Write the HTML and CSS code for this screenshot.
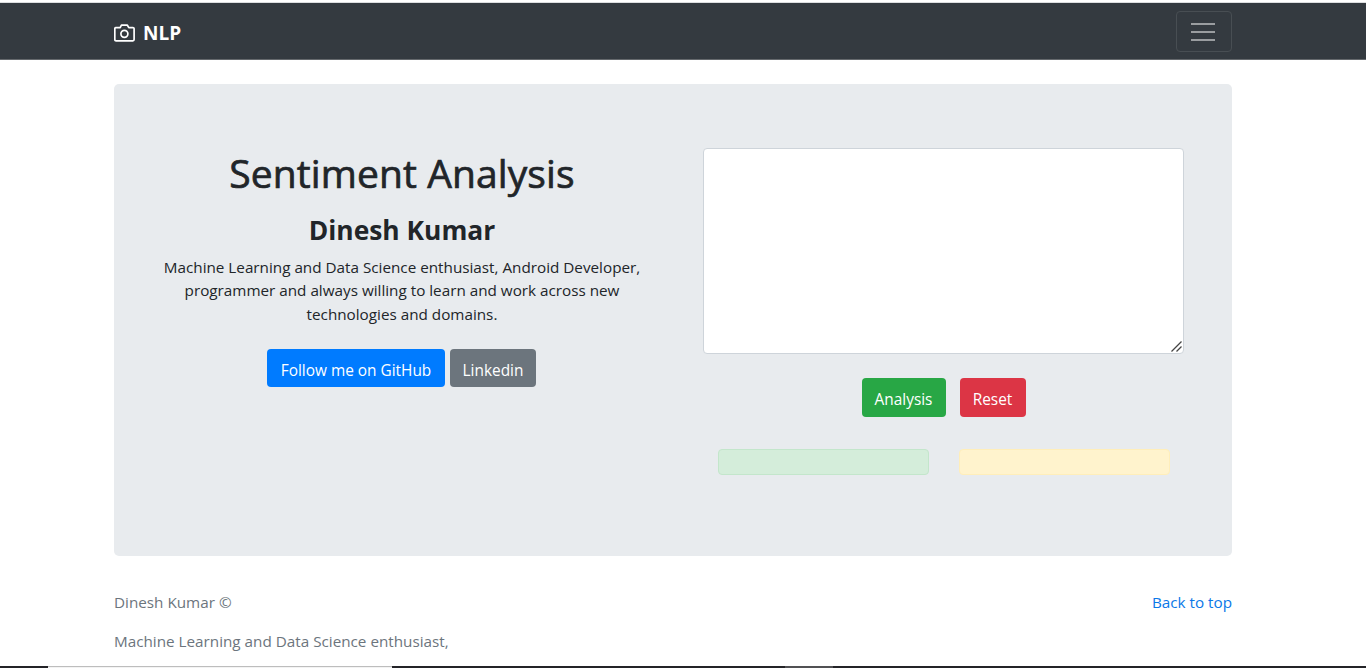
FILE: index.html
```html
<!DOCTYPE html>
<html lang="en">
<head>
<meta charset="utf-8">
<title>NLP</title>
<link rel="stylesheet" href="styles.css">
</head>
<body>
<header class="navbar">
  <div class="container navbar-inner">
    <a class="brand" href="#">
      <svg class="brand-icon" viewBox="0 0 21 18" width="21" height="18" fill="none" stroke="currentColor" stroke-width="1.7" stroke-linejoin="round"><path d="M2 3.6h4.2L7.4 1.2h6L14.8 3.6h4.1a1.2 1.2 0 0 1 1.2 1.2v10.8a1.2 1.2 0 0 1-1.2 1.2H2a1.2 1.2 0 0 1-1.2-1.2V4.8A1.2 1.2 0 0 1 2 3.6z"/><circle cx="10.4" cy="9.8" r="3.5"/></svg>
      <strong class="brand-name">NLP</strong>
    </a>
    <button class="toggler" type="button" aria-label="Toggle navigation">
      <svg width="30" height="30" viewBox="0 0 30 30" stroke="#9a9da0" stroke-width="2"><path d="M3 7h24M3 15h24M3 23h24"/></svg>
    </button>
  </div>
</header>
<main class="container jumbotron">
  <section class="column intro">
    <h1 class="title">Sentiment Analysis</h1>
    <h2 class="author">Dinesh Kumar</h2>
    <p class="bio">Machine Learning and Data Science enthusiast, Android Developer,<br>programmer and always willing to learn and work across new<br>technologies and domains.</p>
    <div class="links">
      <a class="btn btn-primary" href="#">Follow me on GitHub</a>
      <a class="btn btn-secondary" href="#">Linkedin</a>
    </div>
  </section>
  <form class="column analysis">
    <div class="input-wrap">
      <textarea class="input" aria-label="Text"></textarea>
      <svg class="grip" width="12" height="12" viewBox="0 0 12 12" stroke="#444" stroke-width="1.3"><path d="M.5 11.5L10.5 1.5M5.5 11.5L10.5 6.5"/></svg>
    </div>
    <div class="actions">
      <button class="btn btn-success" type="button">Analysis</button>
      <button class="btn btn-danger" type="button">Reset</button>
    </div>
    <div class="results">
      <div class="alert alert-success"></div>
      <div class="alert alert-warning"></div>
    </div>
  </form>
</main>
<footer class="container footer">
  <div class="footer-row">
    <p class="copyright">Dinesh Kumar ©</p>
    <a class="top-link" href="#">Back to top</a>
  </div>
  <p class="tagline">Machine Learning and Data Science enthusiast,</p>
</footer>
<div class="taskbar">
  <div class="taskbar-start"></div>
  <div class="taskbar-search"></div>
  <div class="taskbar-space"></div>
  <div class="taskbar-active"></div>
</div>
</body>
</html>
```
FILE: styles.css
```css
* { box-sizing: border-box; }
body {
  margin: 0;
  height: 668px;
  overflow: hidden;
  display: flex;
  flex-direction: column;
  background: #fff;
  color: #212529;
  font: 15.25px/23.5px "Open Sans", sans-serif;
}
a { text-decoration: none; }
h1, h2, p { margin: 0; }
.container { width: 1118px; margin-left: 114px; }
.navbar {
  height: 58px;
  margin-top: 2px;
  border-top: 1px solid #dcdee0;
  border-bottom: 1px solid #65696d;
  background: #343a40;
  flex: none;
}
.navbar-inner { display: flex; justify-content: space-between; align-items: center; height: 56px; }
.brand { display: flex; align-items: center; color: #fff; gap: 8px; padding-top: 3px; }
.brand-name { font-size: 19px; line-height: 28px; }
.toggler {
  display: flex;
  align-items: center;
  justify-content: center;
  width: 56px;
  height: 41px;
  margin-top: 1px;
  padding: 1px 2px 0 0;
  border: 1px solid #484e53;
  border-radius: 4px;
  background: transparent;
}
.jumbotron {
  display: flex;
  height: 472px;
  margin-top: 24px;
  padding: 64px 48px 0 47px;
  border-radius: 5px;
  background: #e8ebee;
  flex: none;
}
.intro { width: 482px; margin-right: 60px; text-align: center; }
.title {
  font-size: 39px;
  line-height: 48px;
  font-weight: 400;
  letter-spacing: 0.1px;
  -webkit-text-stroke: 0.7px #212529;
  margin-top: 1px;
}
.author { font-size: 26.4px; line-height: 34px; font-weight: 700; margin-top: 16px; }
.bio { margin-top: 8.5px; }
.links { display: flex; justify-content: center; gap: 5px; margin: 22.5px 1px 0 0; }
.btn {
  display: flex;
  align-items: center;
  justify-content: center;
  height: 38px;
  padding: 6px 0 0;
  border: 0;
  border-radius: 4px;
  color: #fff;
  font: 15.4px/24px "Open Sans", sans-serif;
  white-space: nowrap;
}
.btn-primary { width: 178px; background: #007bff; }
.btn-secondary { width: 86px; background: #6c757d; }
.analysis { width: 481px; }
.input-wrap { position: relative; }
.input {
  display: block;
  width: 481px;
  height: 206px;
  border: 1px solid #ced4da;
  border-radius: 4px;
  background: #fff;
  resize: none;
}
.grip { position: absolute; right: 1px; bottom: 2px; }
.actions { display: flex; justify-content: center; gap: 14px; margin-top: 24px; }
.actions .btn { height: 39px; padding-top: 5px; }
.btn-success { width: 84px; background: #28a745; }
.btn-danger { width: 66px; background: #dc3545; }
.results { display: flex; gap: 30px; margin: 32px 0 0 15px; }
.alert { width: 211px; height: 26px; border: 1px solid; border-radius: 4px; }
.alert-success { background: #d4edda; border-color: #c3e6cb; }
.alert-warning { background: #fff3cd; border-color: #ffeeba; }
.footer { margin-top: 35px; color: #6c757d; }
.footer-row { display: flex; justify-content: space-between; }
.top-link { color: #0a78e8; }
.tagline { margin-top: 15px; }
.taskbar { display: flex; height: 2px; margin-top: auto; background: #242428; flex: none; }
.taskbar-start { width: 48px; }
.taskbar-search { width: 344px; border-top: 1px solid #bdbdbd; background: #f3f3f3; }
.taskbar-space { width: 393px; }
.taskbar-active { width: 48px; background: #515154; }
```
